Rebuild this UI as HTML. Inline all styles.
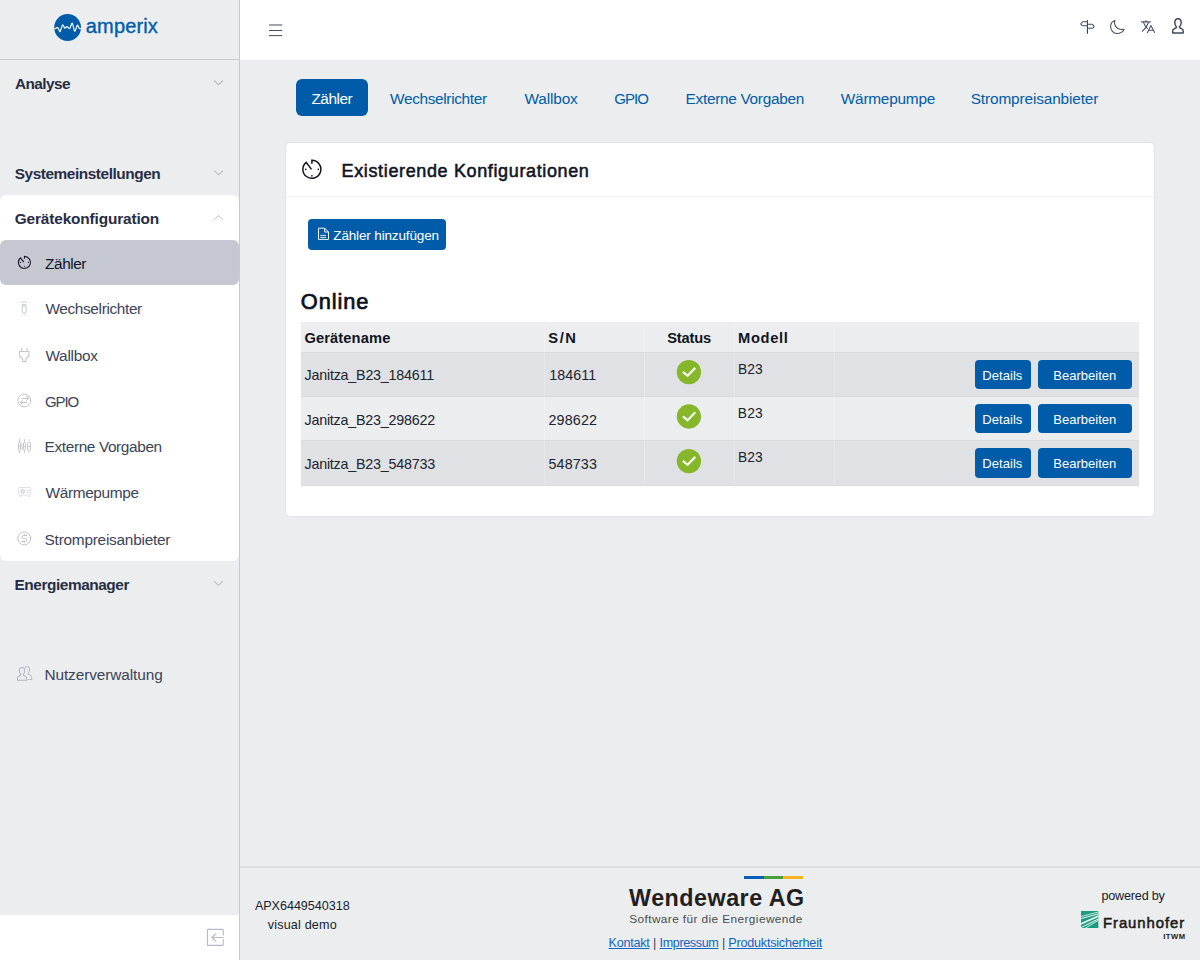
<!DOCTYPE html>
<html lang="de">
<head>
<meta charset="utf-8">
<title>amperix – Zähler</title>
<style>
*{box-sizing:border-box;margin:0;padding:0}
html,body{width:1200px;height:960px;overflow:hidden}
body{font-family:"Liberation Sans","DejaVu Sans",sans-serif;font-size:16px;color:#1f2433;background:#ebedef;position:relative}
.t{position:absolute;white-space:nowrap;line-height:1.2;font-weight:normal;margin:0}
.abs,svg.i{position:absolute;overflow:visible}
#sidebar{position:absolute;left:0;top:0;width:240px;height:960px;background:#ebedef;border-right:1px solid #c6c9d4}
#brandbar{position:absolute;left:0;top:0;width:239px;height:60px;border-bottom:1px solid #c6c9d4}
#panel{position:absolute;left:0;top:195px;width:239px;height:366px;background:#fff;border-radius:6px}
#active{position:absolute;left:0;top:240px;width:239px;height:45px;background:#c5c8d0;border-radius:6px}
#sbfoot{position:absolute;left:0;top:915px;width:239px;height:45px;background:#fff}
#topbar{position:absolute;left:240px;top:0;width:960px;height:60px;background:#fff}
#tabon{position:absolute;left:296px;top:79px;width:71.5px;height:37px;background:#005ca9;border-radius:6px}
#card{position:absolute;left:285px;top:142px;width:870px;height:375px;background:#fff;border:1px solid #e2e4e8;border-radius:5px}
#cardhead{position:absolute;left:286px;top:196px;width:868px;height:1px;background:#eef0f3}
.btn{position:absolute;background:#005ca9;border-radius:4px;border:0}
.row{position:absolute;left:301px;width:838px}
.vsep{position:absolute;top:322px;width:1px;height:164px;background:rgba(255,255,255,.26)}
.hsep{position:absolute;left:301px;width:838px;height:1px;background:#d9dbdf}
#footer{position:absolute;left:240px;top:866.4px;width:960px;height:94px;border-top:2.2px solid #dcdee4;background:#ebedef}
</style>
</head>
<body>
<!-- ============ SIDEBAR ============ -->
<nav id="sidebar">
  <div id="brandbar"></div>
  <div id="panel"></div>
  <div id="active"></div>
  <div id="sbfoot"></div>
</nav>

<!-- brand logo -->
<svg class="i" style="left:53px;top:13px" width="30" height="30" viewBox="53 13 30 30">
  <circle cx="67.6" cy="27.5" r="13.4" fill="#005ca9"/>
  <path d="M54.30 29.00 C54.80 28.77 56.58 27.63 57.30 27.60 C58.02 27.57 58.15 28.10 58.60 28.80 C59.05 29.50 59.57 31.83 60.00 31.80 C60.43 31.77 60.75 29.78 61.20 28.60 C61.65 27.42 62.12 24.78 62.70 24.70 C63.28 24.62 63.98 27.78 64.70 28.10 C65.42 28.42 66.17 26.55 67.00 26.60 C67.83 26.65 68.82 28.97 69.70 28.40 C70.58 27.83 71.47 22.75 72.30 23.20 C73.13 23.65 73.87 30.77 74.70 31.10 C75.53 31.43 76.58 25.72 77.30 25.20 C78.02 24.68 78.42 27.42 79.00 28.00 C79.58 28.58 80.50 28.58 80.80 28.70" fill="none" stroke="#fff" stroke-width="1.15" stroke-linejoin="round" stroke-linecap="butt"/>
</svg>

<!-- chevrons -->
<svg class="i" style="left:0;top:0" width="240" height="960" viewBox="0 0 240 960" fill="none" stroke="#b7bac5" stroke-width="1.1" stroke-linecap="butt" stroke-linejoin="miter">
  <path d="M214.1 80.5 L218.5 84.7 L222.9 80.5"/>
  <path d="M214.1 170.6 L218.5 174.8 L222.9 170.6"/>
  <path d="M214.3 219.7 L218.5 215.5 L222.7 219.7" stroke="#c3c6cf" stroke-width="1"/>
  <path d="M214.1 581.1 L218.5 585.3 L222.9 581.1"/>
</svg>

<!-- sidebar icons -->
<svg class="i" style="left:0;top:240px" width="60" height="460" viewBox="0 240 60 460" fill="none" stroke-linecap="round" stroke-linejoin="round">
  <!-- Zähler (active, dark) -->
  <path stroke="#161b2f" stroke-width="1.15" stroke-linecap="butt" d="M24.45 258.7 L24.45 256.35 A6.05 6.05 0 1 1 20.5 257.8 L23.8 262.1"/>
  <g fill="#161b2f"><circle cx="20.4" cy="262.45" r=".62"/><circle cx="28.5" cy="262.45" r=".62"/><circle cx="24.45" cy="266.5" r=".62"/></g>
  <!-- Wechselrichter -->
  <g stroke="#c6c9d2" stroke-width="1">
    <path d="M21.3 302.5 Q24.2 300.3 27 302.5" stroke="#d2d5dc"/>
    <rect x="22.7" y="304.9" width="3.1" height="2.3" fill="#e4e6ea" stroke="none"/>
    <rect x="22.25" y="304.5" width="3.9" height="8.4" rx=".7"/>
    <path d="M21.3 314.9 L27.3 314.9" stroke="#dcdee4" stroke-width="1.5" stroke-dasharray="1.2 1.4" stroke-linecap="butt"/>
  </g>
  <!-- Wallbox plug -->
  <g stroke="#c2c5ce" stroke-width="1.05" stroke-linecap="butt">
    <path d="M21.7 348 L21.7 351.4 M27 348 L27 351.4"/>
    <path d="M19.6 351.5 L28.9 351.5 L28.9 356 L25.8 358.8 L25.8 361.5 L22.7 361.5 L22.7 358.8 L19.6 356 Z"/>
  </g>
  <!-- GPIO -->
  <g stroke="#c2c5ce" stroke-width="1">
    <circle cx="24.3" cy="400.45" r="6.45"/>
    <path d="M22 398.45 L28.3 398.45 M26.5 396.5 L28.4 398.45 L26.5 400.4"/>
    <path d="M26.7 402.5 L20.4 402.5 M22.3 400.5 L20.3 402.5 L22.3 404.4"/>
  </g>
  <!-- Externe Vorgaben -->
  <g stroke="#c0c3cc" stroke-width=".95" stroke-linecap="butt">
    <path d="M19.5 439.2 L19.5 442.2 M19.5 450.6 L19.5 453 M24.4 439.2 L24.4 442.2 M24.4 450.6 L24.4 453"/>
    <path d="M29.1 439.2 L29.1 442.2 M29.1 450.6 L29.1 453" stroke="#d2d4db"/>
    <rect x="18.5" y="442.4" width="2" height="8" rx="1"/>
    <rect x="23.4" y="442.4" width="2" height="8" rx="1"/>
    <rect x="27.6" y="442.4" width="2.9" height="8" rx="1.3"/>
    <path d="M18.5 446.4 L20.5 446.4 M23.4 446.4 L25.4 446.4 M27.6 446.4 L30.5 446.4"/>
    <rect x="20.9" y="443" width="2.1" height="6.8" fill="#e3e5ea" stroke="none"/>
  </g>
  <!-- Wärmepumpe -->
  <g stroke="#e0e2e7" stroke-width="1">
    <rect x="18.5" y="487.5" width="12.2" height="7.6" rx="1"/>
    <path d="M19.4 496.2 L21.4 496.2 M27.8 496.2 L29.8 496.2" stroke-width="1.2"/>
    <circle cx="22.75" cy="491.3" r="1.9" stroke="#cfd2d9" fill="#e6e8ec"/>
    <path d="M27 490.3 L29.2 490.3 M27 492.5 L29.2 492.5" stroke="#d9dbe1"/>
  </g>
  <!-- Strompreisanbieter -->
  <g stroke="#c2c5ce" stroke-width="1">
    <circle cx="24.3" cy="538.4" r="6.45"/>
    <path d="M26.7 535.5 L23.4 535.5 Q21.9 535.5 21.9 537 Q21.9 538.4 23.4 538.4 L25.4 538.4 Q26.9 538.4 26.9 539.9 Q26.9 541.4 25.4 541.4 L21.6 541.4"/>
    <path d="M24.4 534.2 L24.4 535.5 M24.4 541.4 L24.4 542.8"/>
  </g>
  <!-- Nutzerverwaltung -->
  <g stroke="#b3b6c1" stroke-width="1.05">
    <path d="M25.2 667.4 Q26 666.5 27.3 666.5 Q29.6 666.5 29.6 669.6 Q29.6 672 28.3 673.2 L28.3 674 L30.9 675.6 Q31.7 676.2 31.7 679.4 L28.4 679.4" stroke="#bcbfc9"/>
    <path d="M22 667.4 Q24.7 667.4 24.7 670.6 Q24.7 673 23.4 674.2 L23.4 675 L26 676.6 Q26.8 677.2 26.8 680.2 L17.4 680.2 Q17.4 677.2 18.2 676.6 L20.7 675 L20.7 674.2 Q19.3 673 19.3 670.6 Q19.3 667.4 22 667.4 Z"/>
  </g>
</svg>

<!-- collapse icon -->
<svg class="i" style="left:205px;top:927px" width="22" height="22" viewBox="205 927 22 22" fill="none" stroke="#b7bac5" stroke-width="1.1" stroke-linejoin="round" stroke-linecap="butt">
  <path d="M223.25 935.5 L223.25 929.9 Q223.25 929.4 222.7 929.4 L207.9 929.4 Q207.4 929.4 207.4 929.9 L207.4 944.9 Q207.4 945.4 207.9 945.4 L222.7 945.4 Q223.25 945.4 223.25 944.9 L223.25 939.3"/>
  <path d="M223.8 937.5 L212 937.5 M216.3 933.3 L211.9 937.5 L216.3 941.7"/>
</svg>

<!-- ============ TOPBAR ============ -->
<header id="topbar"></header>
<svg class="i" style="left:240px;top:0" width="960" height="60" viewBox="240 0 960 60" fill="none" stroke-linecap="round" stroke-linejoin="round">
  <!-- hamburger -->
  <g stroke="#4c5066" stroke-width="1.05" stroke-linecap="butt">
    <path d="M269 25 L282.2 25"/>
    <path d="M269 30.5 L282.2 30.5"/>
    <path d="M269 35.6 L282.2 35.6"/>
  </g>
  <!-- signpost -->
  <g stroke="#444c63" stroke-width="1.05">
    <path d="M1087.45 20.1 L1087.45 33.8" stroke="#3a4259" stroke-width="1.15" stroke-linecap="butt"/>
    <path d="M1087.4 21.8 L1083 21.8 Q1082.4 21.8 1082 22.3 L1080.9 23.5 Q1080.6 23.8 1080.9 24.1 L1082 25.3 Q1082.4 25.7 1083 25.7 L1087.4 25.7"/>
    <path d="M1087.4 24.3 L1092 24.3 Q1092.6 24.3 1093 24.8 L1094.1 26 Q1094.4 26.3 1094.1 26.6 L1093 27.8 Q1092.6 28.2 1092 28.2 L1087.4 28.2"/>
  </g>
  <!-- moon -->
  <path stroke="#444c63" stroke-width="1.05" d="M1114.9 20.4 C1113.6 24 1115.6 27.6 1118.4 28.8 C1120.4 29.7 1122.6 29.7 1124.2 29.3 C1122.9 32 1120.2 33.5 1117 33.5 C1113.3 33.5 1110.6 30.4 1110.6 26.6 C1110.6 23.6 1112.3 21.3 1114.9 20.4 Z"/>
  <!-- translate -->
  <g stroke="#444c63" stroke-width="1.05" stroke-linecap="butt">
    <path d="M1141.1 21.9 L1150.7 21.9" stroke-width="1.2"/>
    <path d="M1146 20.3 L1146 21.9"/>
    <path d="M1148.6 22.2 Q1146.6 27.8 1142 31.7"/>
    <path d="M1143.4 22.2 Q1144.6 26 1147.6 28.6"/>
    <path d="M1147.2 33.1 L1150.9 25.6 L1154.7 32.8 M1148.7 30.3 L1153.4 30.3"/>
  </g>
  <!-- user -->
  <path stroke="#3f4860" stroke-width="1.45" d="M1178 18.8 C1180 18.8 1181.2 20.4 1181.2 22.6 C1181.2 24.6 1180.4 26 1179.4 26.9 L1179.6 27.6 L1182.2 29.2 C1182.9 29.6 1183.2 30.2 1183.2 31 L1183.2 33 L1172.7 33 L1172.7 31 C1172.7 30.2 1173 29.6 1173.7 29.2 L1176.4 27.6 L1176.4 26.9 C1175.6 26 1174.8 24.6 1174.8 22.6 C1174.8 20.4 1176 18.8 1178 18.8 Z"/>
</svg>

<!-- ============ TABS ============ -->
<div id="tabon"></div>

<!-- ============ CARD ============ -->
<section id="card"></section>
<div id="cardhead"></div>
<svg class="i" style="left:300px;top:157px" width="24" height="24" viewBox="300 157 24 24" fill="none">
  <path stroke="#12151f" stroke-width="1.5" stroke-linejoin="miter" d="M311.9 163.8 L311.9 160.3 A9 9 0 1 1 306.2 162.3 L311.5 169.4"/>
  <g fill="#12151f"><circle cx="305.7" cy="169.4" r=".8"/><circle cx="318.3" cy="169.4" r=".8"/><circle cx="311.9" cy="175.8" r=".85"/></g>
</svg>

<div class="btn" style="left:308px;top:219px;width:138.3px;height:30.6px"></div>
<svg class="i" style="left:316px;top:226px" width="16" height="16" viewBox="316 226 16 16" fill="none" stroke="#f2f6fb" stroke-width="1" stroke-linejoin="round">
  <path d="M318.5 228.2 L324.7 228.2 L328.5 232 L328.5 239.4 L318.5 239.4 Z"/>
  <path d="M324.7 228.2 L324.7 232 L328.5 232" stroke-width="1"/>
  <path d="M320.3 235.4 L326 235.4 M320.3 237.4 L326 237.4" stroke-width="1" stroke="#dbe7f3"/>
</svg>

<!-- ============ TABLE ============ -->
<div class="row" style="top:322px;height:30px;background:#ebedef"></div>
<div class="row" style="top:352px;height:44.4px;background:#dfe1e4"></div>
<div class="row" style="top:396.4px;height:44.2px;background:#ebedef"></div>
<div class="row" style="top:440.6px;height:44.8px;background:#dfe1e4"></div>
<div class="hsep" style="top:351.5px"></div>
<div class="hsep" style="top:396px"></div>
<div class="hsep" style="top:440.2px"></div>
<div class="hsep" style="top:485px"></div>
<div class="vsep" style="left:544.4px"></div>
<div class="vsep" style="left:644.2px"></div>
<div class="vsep" style="left:733.8px"></div>
<div class="vsep" style="left:834.2px"></div>

<svg class="i" style="left:670px;top:355px" width="40" height="125" viewBox="670 355 40 125">
  <g fill="#86b62a">
    <circle cx="688.9" cy="372.1" r="12.15"/><circle cx="688.9" cy="416.5" r="12.15"/><circle cx="688.9" cy="461.1" r="12.15"/>
  </g>
  <g fill="none" stroke="#f3f7e9" stroke-width="2.25" stroke-linecap="butt" stroke-linejoin="miter">
    <path d="M682.9 371.9 L687.6 375.8 L695.3 367.9"/>
    <path d="M682.9 416.3 L687.6 420.2 L695.3 412.3"/>
    <path d="M682.9 460.9 L687.6 464.8 L695.3 456.9"/>
  </g>
</svg>

<div class="btn" style="left:975px;top:360px;width:55.7px;height:28.8px"></div>
<div class="btn" style="left:1038px;top:360px;width:94px;height:28.8px"></div>
<div class="btn" style="left:975px;top:404.2px;width:55.7px;height:28.8px"></div>
<div class="btn" style="left:1038px;top:404.2px;width:94px;height:28.8px"></div>
<div class="btn" style="left:975px;top:448.4px;width:55.7px;height:29.3px"></div>
<div class="btn" style="left:1038px;top:448.4px;width:94px;height:29.3px"></div>

<!-- ============ FOOTER ============ -->
<footer id="footer"></footer>
<div class="abs" style="left:744.4px;top:876px;width:19.4px;height:3px;background:#0c5db7"></div>
<div class="abs" style="left:763.8px;top:876px;width:19.4px;height:3px;background:#4a9f3d"></div>
<div class="abs" style="left:783.2px;top:876px;width:19.4px;height:3px;background:#f9b223"></div>

<svg class="i" style="left:1081.1px;top:911px" width="17.35" height="17" viewBox="0 0 17.35 17">
  <defs><clipPath id="fhc"><rect x="0" y="0" width="17.35" height="17"/></clipPath></defs>
  <rect x="0" y="0" width="17.35" height="17" fill="#179c7d"/>
  <g stroke="#f4faf8" fill="none" clip-path="url(#fhc)">
    <path d="M-1 5.8 L18 0.8" stroke-width=".8"/>
    <path d="M-1 7.9 L18 2.7" stroke-width="1"/>
    <path d="M-1 13.3 L18 4.7" stroke-width="1.7"/>
    <path d="M-1 17.1 L18 7.6" stroke-width="1"/>
    <path d="M3.5 17.6 L18 8.9" stroke-width=".9"/>
  </g>
</svg>

<!-- ============ TEXTS ============ -->
<div id="g1" class="t" style="left:14.99px;top:75.01px;font-size:15.4px;font-weight:bold;color:#272d43;letter-spacing:-0.594px;">Analyse</div>
<div id="g2" class="t" style="left:14.71px;top:165.01px;font-size:15.4px;font-weight:bold;color:#272d43;letter-spacing:-0.438px;">Systemeinstellungen</div>
<div id="g3" class="t" style="left:14.81px;top:210.01px;font-size:15.4px;font-weight:bold;color:#272d43;letter-spacing:-0.148px;">Gerätekonfiguration</div>
<div id="i1" class="t" style="left:45.12px;top:255.01px;font-size:15.4px;color:#10152a;letter-spacing:-0.471px;">Zähler</div>
<div id="i2" class="t" style="left:45.41px;top:300.01px;font-size:15.4px;color:#3c445a;letter-spacing:-0.358px;">Wechselrichter</div>
<div id="i3" class="t" style="left:45.41px;top:347.01px;font-size:15.4px;color:#3c445a;letter-spacing:-0.263px;">Wallbox</div>
<div id="i4" class="t" style="left:45.06px;top:393.01px;font-size:15px;color:#3c445a;letter-spacing:-1.099px;">GPIO</div>
<div id="i5" class="t" style="left:44.61px;top:438.01px;font-size:15.4px;color:#3c445a;letter-spacing:-0.379px;">Externe Vorgaben</div>
<div id="i6" class="t" style="left:45.50px;top:484.01px;font-size:15.4px;color:#3c445a;letter-spacing:-0.350px;">Wärmepumpe</div>
<div id="i7" class="t" style="left:44.60px;top:531.01px;font-size:15.4px;color:#3c445a;letter-spacing:-0.246px;">Strompreisanbieter</div>
<div id="g4" class="t" style="left:14.51px;top:576.01px;font-size:15.4px;font-weight:bold;color:#272d43;letter-spacing:-0.436px;">Energiemanager</div>
<div id="i8" class="t" style="left:44.47px;top:666.01px;font-size:15.4px;color:#3c445a;letter-spacing:-0.098px;">Nutzerverwaltung</div>
<div id="brand" class="t" style="left:85.83px;top:13.60px;font-size:20px;color:#005ca9;letter-spacing:0.132px;-webkit-text-stroke:0.35px #005ca9;">amperix</div>
<div id="t1" class="t" style="left:311.41px;top:90.01px;font-size:15.4px;color:#fff;letter-spacing:-0.462px;">Zähler</div>
<div id="t2" class="t" style="left:390.10px;top:90.01px;font-size:15.4px;color:#005ca9;letter-spacing:-0.353px;">Wechselrichter</div>
<div id="t3" class="t" style="left:524.43px;top:90.01px;font-size:15.4px;color:#005ca9;letter-spacing:-0.136px;">Wallbox</div>
<div id="t4" class="t" style="left:614.37px;top:90.01px;font-size:15px;color:#005ca9;letter-spacing:-0.978px;">GPIO</div>
<div id="t5" class="t" style="left:685.60px;top:90.01px;font-size:15.4px;color:#005ca9;letter-spacing:-0.307px;">Externe Vorgaben</div>
<div id="t6" class="t" style="left:840.76px;top:90.01px;font-size:15.4px;color:#005ca9;letter-spacing:-0.230px;">Wärmepumpe</div>
<div id="t7" class="t" style="left:970.76px;top:90.01px;font-size:15.4px;color:#005ca9;letter-spacing:-0.141px;">Strompreisanbieter</div>
<h2 id="title" class="t" style="left:341.58px;top:160.50px;font-size:18px;color:#12151f;letter-spacing:0.635px;-webkit-text-stroke:0.55px #12151f;">Existierende Konfigurationen</h2>
<div id="badd" class="t" style="left:333.29px;top:228.31px;font-size:13.5px;color:#fff;letter-spacing:-0.146px;">Zähler hinzufügen</div>
<h3 id="online" class="t" style="left:300.80px;top:289.31px;font-size:21.8px;color:#0d101b;letter-spacing:0.930px;-webkit-text-stroke:0.7px #0d101b;">Online</h3>
<div id="h1" class="t" style="left:304.42px;top:329.71px;font-size:14.7px;font-weight:bold;color:#12151f;letter-spacing:0.112px;">Gerätename</div>
<div id="h2" class="t" style="left:548.33px;top:329.71px;font-size:14.7px;font-weight:bold;color:#12151f;letter-spacing:1.546px;">S/N</div>
<div id="h3" class="t" style="left:667.13px;top:329.71px;font-size:14.7px;font-weight:bold;color:#12151f;letter-spacing:-0.171px;">Status</div>
<div id="h4" class="t" style="left:738.06px;top:329.71px;font-size:14.7px;font-weight:bold;color:#12151f;letter-spacing:0.655px;">Modell</div>
<div id="n0" class="t" style="left:304.52px;top:367.00px;font-size:14.3px;color:#20242f;letter-spacing:-0.214px;">Janitza_B23_184611</div>
<div id="s0" class="t" style="left:549.35px;top:367.00px;font-size:14.3px;color:#20242f;letter-spacing:0.019px;">184611</div>
<div id="m0" class="t" style="left:737.90px;top:362.01px;font-size:13.8px;color:#20242f;letter-spacing:0.128px;">B23</div>
<div id="d0" class="t" style="left:982.37px;top:368.00px;font-size:13px;color:#fff;letter-spacing:0.040px;">Details</div>
<div id="e0" class="t" style="left:1053.23px;top:368.00px;font-size:13px;color:#fff;letter-spacing:0.028px;">Bearbeiten</div>
<div id="n1" class="t" style="left:304.51px;top:411.50px;font-size:14.3px;color:#20242f;letter-spacing:-0.219px;">Janitza_B23_298622</div>
<div id="s1" class="t" style="left:548.38px;top:411.50px;font-size:14.3px;color:#20242f;letter-spacing:0.189px;">298622</div>
<div id="m1" class="t" style="left:737.86px;top:406.01px;font-size:13.8px;color:#20242f;letter-spacing:0.133px;">B23</div>
<div id="d1" class="t" style="left:982.37px;top:412.00px;font-size:13px;color:#fff;letter-spacing:0.040px;">Details</div>
<div id="e1" class="t" style="left:1053.23px;top:412.00px;font-size:13px;color:#fff;letter-spacing:0.028px;">Bearbeiten</div>
<div id="n2" class="t" style="left:304.52px;top:455.50px;font-size:14.3px;color:#20242f;letter-spacing:-0.221px;">Janitza_B23_548733</div>
<div id="s2" class="t" style="left:548.46px;top:455.50px;font-size:14.3px;color:#20242f;letter-spacing:0.153px;">548733</div>
<div id="m2" class="t" style="left:737.90px;top:450.01px;font-size:13.8px;color:#20242f;letter-spacing:0.128px;">B23</div>
<div id="d2" class="t" style="left:982.37px;top:456.00px;font-size:13px;color:#fff;letter-spacing:0.040px;">Details</div>
<div id="e2" class="t" style="left:1053.23px;top:456.00px;font-size:13px;color:#fff;letter-spacing:0.028px;">Bearbeiten</div>
<div id="f1" class="t" style="left:254.90px;top:899.01px;font-size:12.6px;color:#181c30;letter-spacing:-0.038px;">APX6449540318</div>
<div id="f2" class="t" style="left:267.72px;top:917.71px;font-size:12.6px;color:#181c30;letter-spacing:0.173px;">visual demo</div>
<a id="l1" class="t" href="#" style="left:608.60px;top:936.01px;font-size:12.6px;color:#0f66c0;letter-spacing:-0.267px;text-decoration:underline;">Kontakt</a>
<div id="p1" class="t" style="left:652.99px;top:936.01px;font-size:12.6px;color:#3b3f55;">|</div>
<a id="l2" class="t" href="#" style="left:659.60px;top:936.01px;font-size:12.6px;color:#0f66c0;letter-spacing:-0.387px;text-decoration:underline;">Impressum</a>
<div id="p2" class="t" style="left:722.01px;top:936.01px;font-size:12.6px;color:#3b3f55;">|</div>
<a id="l3" class="t" href="#" style="left:728.21px;top:936.01px;font-size:12.6px;color:#0f66c0;letter-spacing:-0.203px;text-decoration:underline;">Produktsicherheit</a>
<div id="pw" class="t" style="left:1101.51px;top:888.71px;font-size:12.6px;color:#181c30;letter-spacing:-0.195px;">powered by</div>
<div id="ww" class="t" style="left:629.07px;top:885.01px;font-size:23.3px;font-weight:bold;color:#231f20;letter-spacing:0.504px;">Wendeware AG</div>
<div id="ws" class="t" style="left:629.23px;top:911.60px;font-size:11.8px;color:#4b4b4d;letter-spacing:0.421px;">Software für die Energiewende</div>
<div id="fh" class="t" style="left:1103.03px;top:914.71px;font-size:14.9px;color:#1f1a17;letter-spacing:0.923px;-webkit-text-stroke:0.55px #1f1a17;">Fraunhofer</div>
<div id="it" class="t" style="left:1163.15px;top:932.40px;font-size:7.6px;font-weight:bold;color:#1f1a17;letter-spacing:0.553px;">ITWM</div>
</body>
</html>
